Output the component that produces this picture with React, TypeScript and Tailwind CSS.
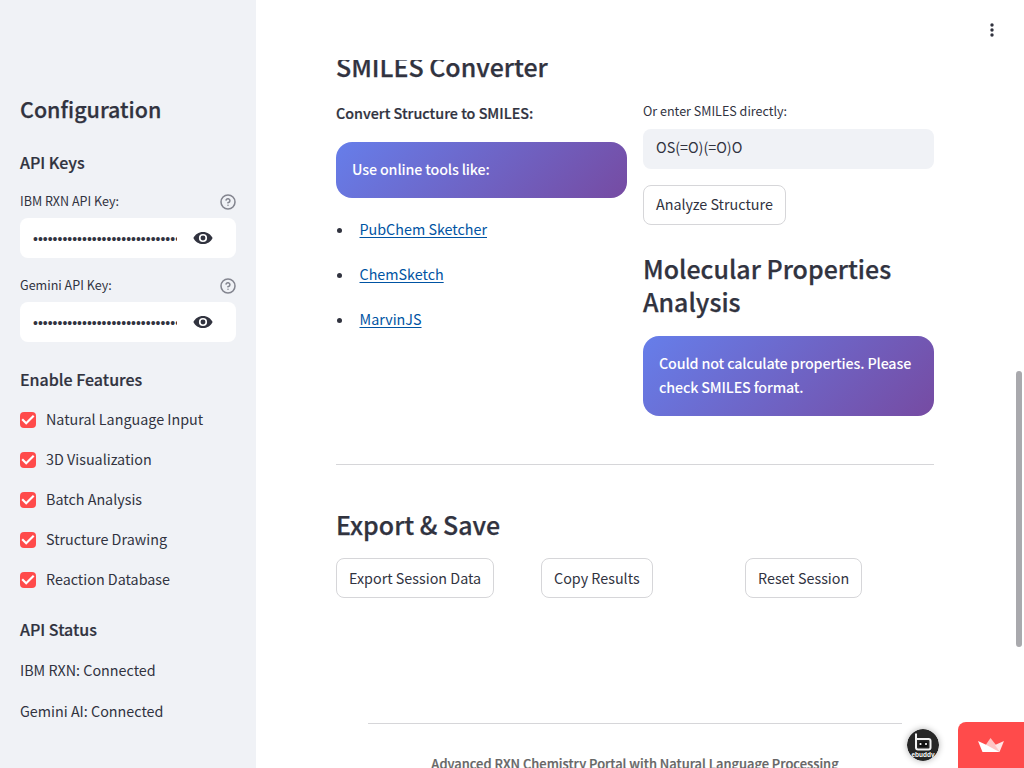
import React from "react";

const features = [
  "Natural Language Input",
  "3D Visualization",
  "Batch Analysis",
  "Structure Drawing",
  "Reaction Database",
];

const links = ["PubChem Sketcher", "ChemSketch", "MarvinJS"];

function HelpIcon() {
  return (
    <svg className="size-4" viewBox="0 0 24 24" fill="none" stroke="#83858f" strokeWidth="2.3" strokeLinecap="round" strokeLinejoin="round">
      <circle cx="12" cy="12" r="10.500" />
      <path d="M9.09 9a3 3 0 0 1 5.83 1c0 2-3 3-3 3" />
      <path d="M12 17h.01" />
    </svg>
  );
}

function EyeIcon() {
  return (
    <svg className="h-[14px] w-5" viewBox="0 0 20 14" fill="#31333f">
      <path fillRule="evenodd" d="M10 .9C5.7.9 2 3.4.4 7 2 10.600 5.700 13.100 10 13.100s8-2.500 9.600-6.100C18 3.400 14.300.9 10 .9Zm0 10.200a4.100 4.100 0 1 1 0-8.200 4.100 4.100 0 0 1 0 8.200Zm0-6.550a2.450 2.450 0 1 0 0 4.900 2.450 2.450 0 0 0 0-4.900Z" />
    </svg>
  );
}

function KeyField({ label }: { label: string }) {
  return (
    <div className="mb-4 flex flex-col">
      <div className="flex h-6 items-center justify-between text-[12.55px]">
        <span className="pb-0.5">{label}</span>
        <HelpIcon />
      </div>
      <div className="mt-1 flex h-10 items-center rounded-lg bg-white pl-[13px]">
        <span className="mt-0.5 w-36 overflow-hidden font-['Liberation_Sans'] text-[14px] leading-5 whitespace-nowrap">
          {"•".repeat(30)}
        </span>
        <span className="ml-4">
          <EyeIcon />
        </span>
      </div>
    </div>
  );
}

function Check() {
  return (
    <span className="flex size-4 items-center justify-center rounded bg-[#ff4b4b]">
      <svg className="size-4" viewBox="0 0 16 16" fill="none" stroke="white" strokeWidth="2.2">
        <path d="M2.200 7.300 6.200 11.200 13.700 3.700" />
      </svg>
    </span>
  );
}

function Button({ children, className = "" }: { children: React.ReactNode; className?: string }) {
  return (
    <button className={`h-10 rounded-lg border border-[#d6d6d9] bg-white px-3 text-[14.330px] whitespace-nowrap ${className}`}>
      {children}
    </button>
  );
}

function Notice({ children }: { children: React.ReactNode }) {
  return (
    <div className="rounded-2xl bg-[linear-gradient(135deg,#667eea_0%,#764ba2_100%)] px-4 pt-[15px] pb-[17px] text-[14.3px] leading-6 font-medium tracking-[-0.15px] text-white">
      {children}
    </div>
  );
}

function AvatarLogo() {
  return (
    <svg className="size-8 rounded-full shadow-[0_0_6px_rgba(0,0,0,0.3)]" viewBox="0 0 32 32">
      <circle cx="16" cy="16" r="16" fill="#262626" />
      <path d="M9 4.500v14q0 2 2 2h10.500q2 0 2-2v-6.500q0-2-2-2H9" fill="none" stroke="#f2f2f2" strokeWidth="2" />
      <rect x="11.500" y="12.500" width="9.500" height="5.500" rx="1.500" fill="#111" />
      <circle cx="13.500" cy="15" r="1.100" fill="white" />
      <circle cx="19" cy="15" r="1.100" fill="white" />
      <text x="16" y="27.500" textAnchor="middle" textLength="23" lengthAdjust="spacingAndGlyphs" fontSize="6.5" fontWeight="700" fill="white" fontFamily="Liberation Sans">ebuddy</text>
    </svg>
  );
}

export default function App() {
  return (
    <div className="relative flex h-screen w-full overflow-hidden bg-white font-['Noto_Sans_CJK_SC',sans-serif] text-[14.330px] leading-6 text-[#31333f]">
      <aside className="flex w-64 shrink-0 flex-col bg-[#f0f2f6] px-5 pt-[94px]">
        <h2 className="text-[21.5px] leading-[29px] font-medium [-webkit-text-stroke:0.25px]">Configuration</h2>
        <h3 className="mt-[28px] mb-[17px] text-[16px] leading-[22px] font-medium [-webkit-text-stroke:0.2px]">API Keys</h3>
        <KeyField label="IBM RXN API Key:" />
        <KeyField label="Gemini API Key:" />
        <h3 className="mt-[10px] text-[16px] leading-[22px] font-medium [-webkit-text-stroke:0.2px]">Enable Features</h3>
        <div className="mt-[18px] flex flex-col gap-4">
          {features.map((f) => (
            <label key={f} className="flex h-6 items-center gap-[10px]">
              <Check />
              <span className="pb-0.5">{f}</span>
            </label>
          ))}
        </div>
        <h3 className="mt-[26px] mb-[18px] text-[16px] leading-[22px] font-medium [-webkit-text-stroke:0.2px]">API Status</h3>
        <p>IBM RXN: Connected</p>
        <p className="mt-[17px]">Gemini AI: Connected</p>
      </aside>

      <main className="flex flex-1 flex-col">
        <header className="flex h-[60px] shrink-0 items-center justify-end pr-[30px]">
          <svg className="h-4 w-1" viewBox="0 0 4 16" fill="#31333f">
            <circle cx="2" cy="3" r="1.700" />
            <circle cx="2" cy="8" r="1.700" />
            <circle cx="2" cy="13" r="1.700" />
          </svg>
        </header>
        <div className="flex min-h-0 flex-1 flex-col overflow-hidden pr-[90px] pl-20">
          <h2 className="-mt-[11px] h-[34px] shrink-0 text-[24.950px] leading-[34px] font-medium [-webkit-text-stroke:0.25px]">SMILES Converter</h2>
          <div className="mt-[18px] flex shrink-0 gap-4">
            <section className="w-[291px]">
              <p className="mb-[17px] font-medium [-webkit-text-stroke:0.2px]">Convert Structure to SMILES:</p>
              <Notice>Use online tools like:</Notice>
              <ul className="mt-[19px] flex flex-col gap-[21px]">
                {links.map((l) => (
                  <li key={l} className="flex items-center">
                    <span className="mt-0.5 mr-[17.500px] ml-px size-[5px] rounded-full bg-[#31333f]" />
                    <a className="text-[#0054a3] underline underline-offset-[1.5px]">{l}</a>
                  </li>
                ))}
              </ul>
            </section>
            <section className="w-[291px]">
              <p className="-mt-[2px] mb-[6px] text-[12.55px]">Or enter SMILES directly:</p>
              <div className="mb-4 flex h-10 items-center rounded-lg bg-[#f0f2f6] px-[13px] pb-1">OS(=O)(=O)O</div>
              <Button className="pb-0.5">Analyze Structure</Button>
              <h2 className="mt-[27px] mb-[18px] text-[24.950px] leading-[33px] font-medium [-webkit-text-stroke:0.25px]">Molecular Properties Analysis</h2>
              <Notice>Could not calculate properties. Please check SMILES format.</Notice>
            </section>
          </div>
          <hr className="mt-12 shrink-0 border-[#d6d6d9]" />
          <h2 className="mt-[42px] shrink-0 text-[24.950px] leading-[34px] font-medium [-webkit-text-stroke:0.25px]">Export &amp; Save</h2>
          <div className="mt-[17px] grid shrink-0 grid-cols-[189px_188px_189px] gap-4">
            <div><Button>Export Session Data</Button></div>
            <div><Button>Copy Results</Button></div>
            <div><Button>Reset Session</Button></div>
          </div>
          <footer className="mx-8 mt-[125px] shrink-0 border-t border-[#d6d6d9] pt-[28px] text-center text-[12.930px] font-medium whitespace-nowrap text-[#666] [-webkit-text-stroke:0.2px]">
            Advanced RXN Chemistry Portal with Natural Language Processing
          </footer>
        </div>
      </main>

      <div className="absolute top-[371px] right-[2px] h-[276px] w-[6px] rounded-full bg-[#a9a9ad]" />
      <div className="absolute top-[729px] left-[907px]">
        <AvatarLogo />
      </div>
      <div className="absolute right-0 bottom-0 flex h-[46px] w-[66px] items-center justify-center rounded-tl-lg bg-[#ff4b4b]">
        <svg className="h-[14px] w-[26px]" viewBox="0 0 26 14">
          <path d="M12.500 0 18 7 21.500 14H5L8 6.500Z" fill="#ffc4c4" />
          <path d="M26 3 21.500 14 17 7Z" fill="#ffe5e5" />
          <path d="M0 3 7.500 6.500 21.500 14H4.500Z" fill="white" />
        </svg>
      </div>
    </div>
  );
}
